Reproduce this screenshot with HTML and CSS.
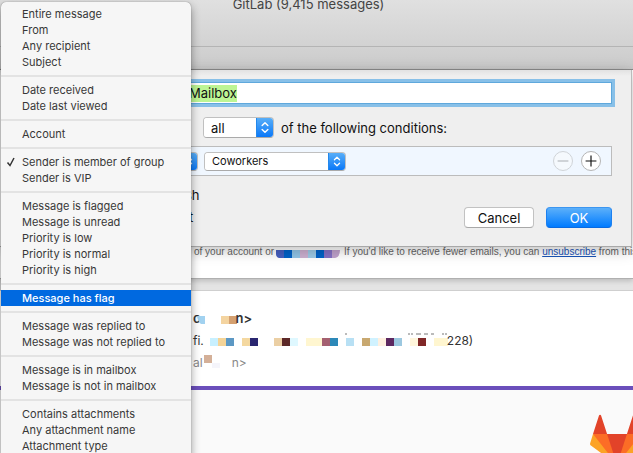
FILE: index.html
```html
<!DOCTYPE html>
<html lang="en">
<head>
<meta charset="utf-8">
<meta name="viewport" content="width=device-width, initial-scale=1">
<title>GitLab mailbox</title>
<link rel="stylesheet" href="styles.css">
</head>
<body>
<div class="window">
  <header class="titlebar">GitLab (9,415 messages)</header>
  <div class="toolbar"></div>
  <main class="mail">
    <section class="message message-first">
      <p class="footnote"><span>of your account or</span><svg class="chip" width="65" height="8" viewBox="0 0 65 8" aria-hidden="true"><path fill="#4660c0" d="M1 0h8v8H4Q1 7 1 4z"/><path fill="#0062c8" d="M9 0h8v8H9zM41 0h8v8h-8z"/><path fill="#90c4e6" d="M17 0h8v8h-8z"/><path fill="#ccb0d0" d="M25 0h8v8h-8z"/><path fill="#9ccae6" d="M33 0h8v8h-8z"/><path fill="#8470c4" d="M49 0h8v8h-8z"/><path fill="#c0a2cc" d="M57 0h8q0 7-5 8h-3z"/></svg><span>If you'd like to receive fewer emails, you can <a href="#">unsubscribe</a> from this</span></p>
    </section>
    <section class="message message-second">
      <div class="line sender"><span>c</span><svg class="pixels" width="35" height="8" viewBox="0 0 35 8" aria-hidden="true"><path fill="#a2d2f0" d="M-4 0h8v8H0Q-3 6-4 0z"/><path fill="#f4d4a0" d="M20 0h8v8h-8z"/><path fill="#d4a070" d="M28 0h8v8h-8z"/></svg><span>n&gt;</span></div>
      <div class="line subject"><span>fi.</span><svg class="pixels" width="243" height="8" viewBox="206 0 243 8" aria-hidden="true"><path fill="#c8f0ff" d="M212 0h8v8h-8z"/><path fill="#f4d498" d="M220 0h8v8h-8z"/><path fill="#5c98c4" d="M228 0h8v8h-8z"/><path fill="#f4d8a0" d="M244 0h8v8h-8z"/><path fill="#2a2670" d="M252 0h8v8h-8z"/><path fill="#ebcfa4" d="M276 0h8v8h-8z"/><path fill="#5c2828" d="M284 0h8v8h-8z"/><path fill="#dff8ff" d="M292 0h8v8h-8z"/><path fill="#fff6d0" d="M308 0h16v8h-16zM436 0h14v8h-14z"/><path fill="#a46070" d="M324 0h8v8h-8z"/><path fill="#2c88b8" d="M332 0h8v8h-8z"/><path fill="#b8e0f4" d="M348 0h8v8h-8z"/><path fill="#c8a870" d="M364 0h8v8h-8z"/><path fill="#d0f2ff" d="M372 0h8v8h-8z"/><path fill="#fff0e0" d="M380 0h8v8h-8z"/><path fill="#5c2860" d="M388 0h8v8h-8z"/><path fill="#9cc8e0" d="M396 0h8v8h-8z"/><path fill="#fff6dc" d="M412 0h8v8h-8z"/><path fill="#802828" d="M420 0h8v8h-8z"/><path fill="none" stroke="#777" stroke-width="1" d="M347-4h2M410-4h2m1 0h2m3 0h5m3 0h4m3 0h3m8 0h2m1 0h2"/></svg><span>228)</span></div>
      <div class="line recipient"><span>al</span><svg class="pixels" width="29" height="8" viewBox="203 0 29 8" aria-hidden="true"><path fill="#d4b098" d="M204-5h8v8h-8z"/><path fill="#f5f5fb" d="M212 3h8v5h-8z"/></svg><span>n&gt;</span></div>
    </section>
    <section class="brand">
      <svg width="54" height="54" viewBox="0 0 36 36" role="img" aria-label="GitLab"><path fill="#e24329" d="M2 14l9.38 9v-9l-4-12.28c-.205-.632-1.176-.632-1.38 0z"/><path fill="#e24329" d="M34 14l-9.38 9v-9l4-12.28c.205-.632 1.176-.632 1.38 0z"/><path fill="#e24329" d="M18 34.38L3 14h30z"/><path fill="#fc6d26" d="M18 34.38L11.38 14H2l4 11z"/><path fill="#fc6d26" d="M18 34.38L24.62 14H34l-4 11z"/><path fill="#fca326" d="M2 14L.1 20.16c-.18.565 0 1.2.5 1.56L18 34.38z"/><path fill="#fca326" d="M34 14l1.9 6.16c.18.565 0 1.2-.5 1.56L18 34.38z"/></svg>
    </section>
  </main>
</div>

<form class="sheet">
  <input class="name" type="text" value="Mailbox" aria-label="Smart mailbox name">
  <div class="match">
    <span class="popup popup-all">
      <select id="match" aria-label="Match"><option>all</option><option>any</option></select>
      <svg class="stepper" viewBox="0 0 16 20" aria-hidden="true"><path d="M5 8l3-3 3 3M5 12l3 3 3-3"/></svg>
    </span>
    <label for="match">of the following conditions:</label>
  </div>
  <div class="rule">
    <span class="popup popup-field">
      <svg class="stepper" viewBox="0 0 16 20" aria-hidden="true"><path d="M5 8l3-3 3 3M5 12l3 3 3-3"/></svg>
    </span>
    <span class="popup popup-group">
      <select aria-label="Group"><option>Coworkers</option></select>
      <svg class="stepper" viewBox="0 0 16 20" aria-hidden="true"><path d="M5 8l3-3 3 3M5 12l3 3 3-3"/></svg>
    </span>
    <button class="round" type="button" disabled aria-label="Remove condition"><svg viewBox="0 0 20 20"><path d="M4 10h12"/></svg></button>
    <button class="round" type="button" aria-label="Add condition"><svg viewBox="0 0 20 20"><path d="M4 10h12M10 4v12"/></svg></button>
  </div>
  <div class="bottom">
    <div class="includes"><span>sh</span><span class="include-last">t</span></div>
    <button class="push" type="button">Cancel</button>
    <button class="push primary" type="button">OK</button>
  </div>
</form>

<div class="menu" role="menu">
  <button role="menuitem">Entire message</button>
  <button role="menuitem">From</button>
  <button role="menuitem">Any recipient</button>
  <button role="menuitem">Subject</button>
  <hr>
  <button role="menuitem">Date received</button>
  <button role="menuitem">Date last viewed</button>
  <hr>
  <button role="menuitem">Account</button>
  <hr>
  <button role="menuitem"><svg class="check" viewBox="0 0 10 10" aria-hidden="true"><path d="M1.500 5.500L4 8.500 8 1"/></svg>Sender is member of group</button>
  <button role="menuitem">Sender is VIP</button>
  <hr>
  <button role="menuitem">Message is flagged</button>
  <button role="menuitem">Message is unread</button>
  <button role="menuitem">Priority is low</button>
  <button role="menuitem">Priority is normal</button>
  <button role="menuitem">Priority is high</button>
  <hr>
  <button role="menuitem" class="selected">Message has flag</button>
  <hr>
  <button role="menuitem">Message was replied to</button>
  <button role="menuitem">Message was not replied to</button>
  <hr>
  <button role="menuitem">Message is in mailbox</button>
  <button role="menuitem">Message is not in mailbox</button>
  <hr>
  <button role="menuitem">Contains attachments</button>
  <button role="menuitem">Any attachment name</button>
  <button role="menuitem">Attachment type</button>
</div>
</body>
</html>
```
FILE: styles.css
```css
* { box-sizing: border-box; }

body {
  margin: 0;
  height: 100vh;
  overflow: hidden;
  position: relative;
  font-family: Inter, "Liberation Sans", sans-serif;
  font-size: 13px;
  color: #111;
}

button, input, select { font: inherit; color: inherit; margin: 0; }

.window { display: flex; flex-direction: column; height: 100vh; }

.titlebar {
  height: 47px;
  flex: none;
  padding-right: 16px;
  line-height: 8px;
  text-align: center;
  color: #444;
  background: linear-gradient(#e0e0e0, #d2d2d2);
  border-bottom: 1px solid #b4b4b4;
}

.toolbar {
  height: 23px;
  flex: none;
  background: linear-gradient(#d2d2d2, #cbcbcb);
  border-bottom: 1px solid #858585;
}

.mail {
  flex: 1;
  min-height: 0;
  display: flex;
  flex-direction: column;
  background: #e4e4e4;
}

.message { flex: none; background: #fff; }
.message-first {
  padding: 174px 0 19px 194px;
  border-bottom: 1px solid #b0b0b0;
  box-shadow: 0 2px 5px #bbb;
}
.message-second {
  margin-top: 11px;
  padding: 16px 0 13px 193px;
  border-top: 1px solid #cfcfcf;
}

.footnote {
  display: flex;
  align-items: center;
  margin: 0;
  font: 10px/15px "Liberation Sans", sans-serif;
  color: #666;
  white-space: nowrap;
}
.footnote a { color: #1a55b8; }
.chip { flex: none; margin: 4px 4px 0 1px; }

.line { display: flex; align-items: center; height: 22px; color: #333; }
.sender { font-weight: 600; }
.subject, .recipient { font-size: 12px; }
.recipient { color: #888; }
.pixels { flex: none; overflow: visible; margin-top: 4px; }

.brand {
  flex: 1;
  display: flex;
  justify-content: flex-end;
  align-items: flex-start;
  min-height: 0;
  padding-top: 23px;
  background: #fafafa;
  border-top: 4px solid #6b4fbb;
}
.brand svg { flex: none; margin-right: -11px; }

.sheet {
  position: absolute;
  top: 70px;
  left: 0;
  right: 1px;
  padding: 12px 19px 18px 101px;
  background: linear-gradient(#e2e2e2, #efefef 6px);
  border-right: 1px solid #bbb;
  border-bottom: 1px solid #a8a8a8;
  box-shadow: 0 3px 14px #0004;
}

.name {
  display: block;
  width: 100%;
  height: 22px;
  padding: 0 0 0 87px;
  border: 1px solid #5fa8dc;
  outline: 3px solid #88c0e8;
  background: linear-gradient(to right, #bdf594 135px, #fff 135px) 0 2px / 100% 17px no-repeat, #fff;
}

.match { display: flex; align-items: center; gap: 7px; margin: 13px 0 8px 102px; }

.popup {
  position: relative;
  display: flex;
  flex: none;
  overflow: hidden;
  border: 1px solid #c0c0c0;
  border-bottom-color: #aaa;
  border-radius: 4px;
  background: #fff;
}
.popup select {
  appearance: none;
  flex: 1;
  min-width: 0;
  border: 0;
  padding: 0 7px;
  background: #fff;
}
.popup-all { width: 71px; height: 21px; }
.popup-group { width: 142px; height: 19px; font-size: 11px; }
.popup-field { width: 98px; height: 19px; justify-content: flex-end; }

.stepper {
  flex: none;
  width: 16px;
  height: 100%;
  background: linear-gradient(#58aef8, #0a78f8);
  outline: 1px solid #2388ec;
}
.stepper path { fill: none; stroke: #fff; stroke-width: 1.500; stroke-linecap: round; stroke-linejoin: round; }

.rule {
  display: flex;
  align-items: center;
  gap: 8px;
  height: 30px;
  padding-right: 10px;
  border: 1px solid #bcbcbc;
  background: #f0f7ff;
}
.popup-field { margin-left: -2px; }
.popup-group { margin-right: auto; margin-left: -2px; }

.round {
  width: 20px;
  height: 20px;
  padding: 0;
  border: 1px solid #b5b5b5;
  border-radius: 50%;
  background: #fff;
  display: flex;
}
.round svg { width: 18px; height: 18px; }
.round path { stroke: #111; stroke-width: 1.300; }
.round:disabled { border-color: #d0d4d8; background: #f5f9fd; }
.round:disabled path { stroke: #b4b8bc; }

.bottom { display: flex; align-items: flex-end; gap: 12px; margin-top: 8px; }
.includes { flex: 1; padding-left: 84px; line-height: 22px; display: flex; flex-direction: column; }
.include-last { padding-left: 4px; }
.push {
  width: 70px;
  height: 21px;
  padding: 0;
  border: 1px solid #c2c2c2;
  border-bottom-color: #a8a8a8;
  border-radius: 4px;
  background: #fff;
}
.primary {
  width: 66px;
  color: #fff;
  border-color: #3c96f0 #1c80f0 #0a6ae0;
  background: linear-gradient(#5cb0fa, #007bff);
}

.menu {
  position: absolute;
  top: 2px;
  left: 1px;
  width: 190px;
  padding: 4px 0;
  border-radius: 5px;
  background: #f6f6f6;
  box-shadow: 0 0 1px #0008, 0 4px 10px #0006;
}
.menu button {
  position: relative;
  display: block;
  width: 100%;
  height: 16px;
  padding: 0 0 0 21px;
  border: 0;
  background: none;
  font-size: 11px;
  line-height: 16px;
  text-align: left;
  white-space: nowrap;
  color: #383838;
}
.menu hr { height: 2px; margin: 5px 0; border: 0; background: #e3e3e3; }
.menu .selected { background: #0069e0; color: #fff; font-weight: 500; }
.check { position: absolute; left: 5px; top: 3px; width: 10px; height: 10px; }
.check path { fill: none; stroke: #333; stroke-width: 1.500; }
```
